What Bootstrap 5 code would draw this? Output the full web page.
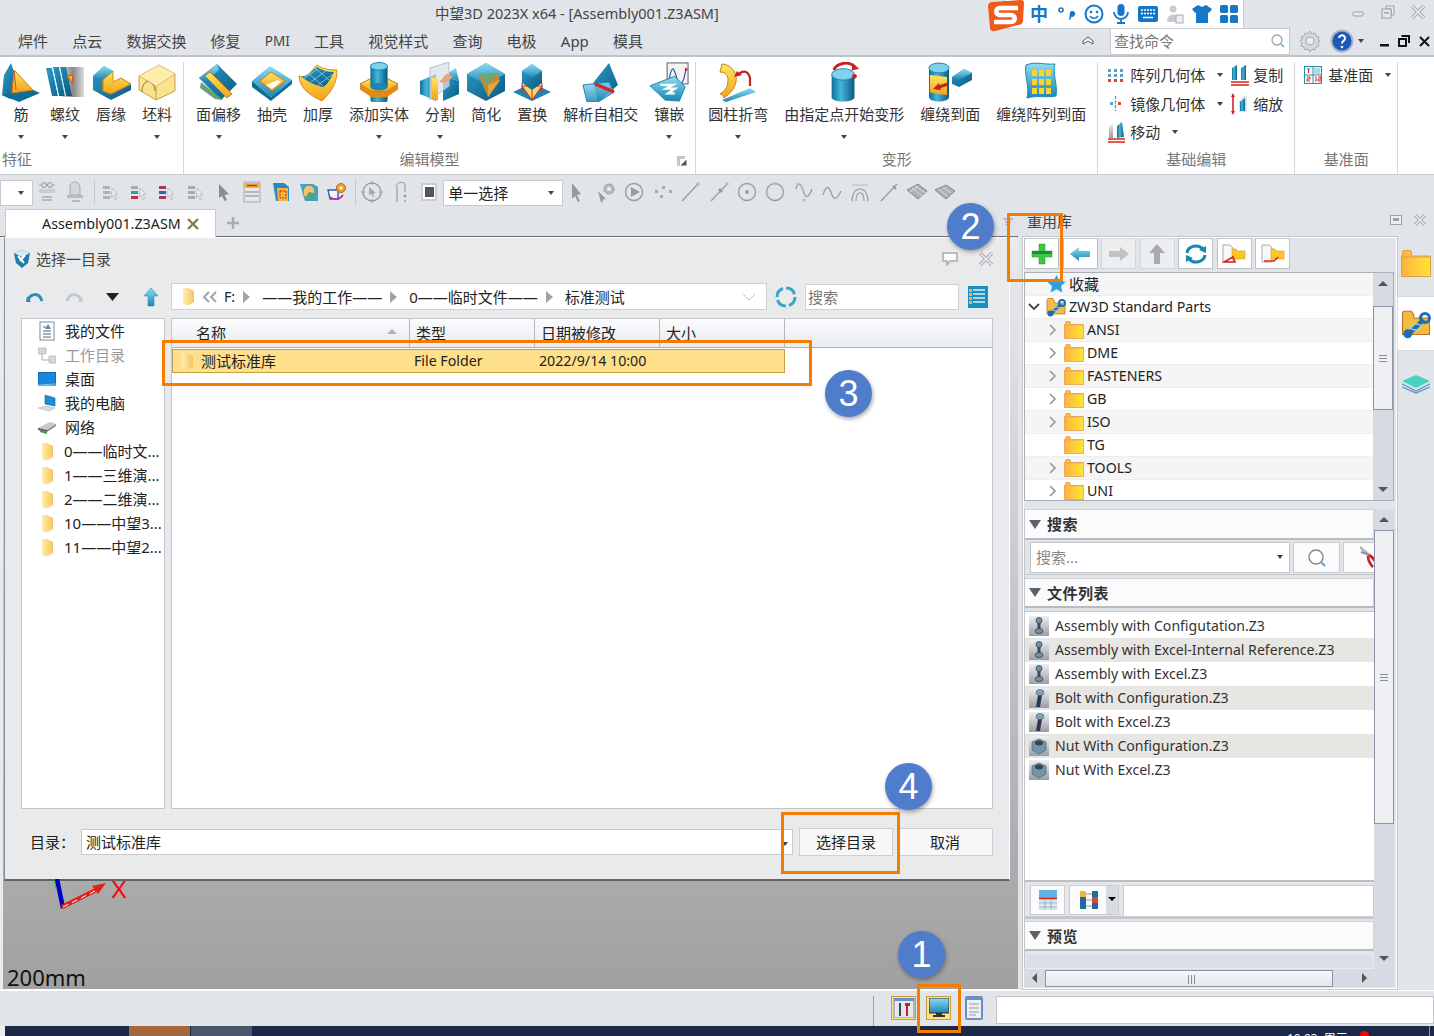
<!DOCTYPE html>
<html lang="en">
<head>
<meta charset="UTF-8">
<title>中望3D 2023X x64</title>
<link href="https://cdn.jsdelivr.net/npm/bootstrap@5.3.0/dist/css/bootstrap.min.css" rel="stylesheet">
<style>
html,body{margin:0;padding:0}
body{width:1434px;height:1036px;overflow:hidden;position:relative;background:#e1e5e9;color:#333;
  font-family:"Noto Sans","Noto Sans CJK SC",sans-serif;font-size:15px;line-height:20px}
svg{display:block;flex:none}
.zw-defs{position:absolute;width:0;height:0}
.zw-latin{font-size:14.2px}
.zw-title{height:27px;font-size:14.5px;color:#444;padding-left:435px;line-height:26px}
.zw-winbtns{position:absolute;top:4px;left:1350px;gap:14px}
.zw-menu{height:28px;padding:0 4px 0 18px;gap:24.2px;line-height:30px;color:#444}
.zw-menu .nav-link{padding:0;color:#444}
.zw-pmi{font-size:13.5px}
.zw-find{width:180px;height:27px;background:#fff;border:1px solid #c6cacf;color:#777;font-size:15px;padding:0 3px;line-height:25px}
.zw-ctl-min{margin-left:16px}
.zw-ctl-x{margin-left:9px}
.zw-ribbon{height:119px;background:#fff;border-top:2px solid #bfc4c9;padding-top:5px;box-shadow:0 1px 0 #c4c8cc}
.zw-group{position:relative;padding:0 3px 0 4px;height:112px;border-right:1px solid #d4d6d9;flex:none}
.zw-group-first{padding-left:0}
.zw-group-last{width:103px;padding-left:9px}
.zw-g4{width:197px;padding:0 0 0 9px}
.zw-g4>div:first-child,.zw-group-last>.zw-sm{margin-top:-1px}
.zw-glabel{position:absolute;left:0;right:0;bottom:5px;text-align:center;color:#777;line-height:20px}
.zw-glabel-left{text-align:left;left:2px}
.zw-glabel-edit{right:20px}
.zw-items{height:88px}
.zw-item{min-width:46px;color:#333;flex:none}
.zw-item-first{min-width:42px}
.zw-item span{margin-top:2px;padding:0 8px;white-space:nowrap;line-height:20px}
.zw-car{width:0;height:0;border-left:3.5px solid transparent;border-right:3.5px solid transparent;border-top:4.5px solid #444}
.zw-item .zw-car{margin-top:11px}
.zw-sm{height:28.5px;gap:6px;white-space:nowrap;color:#333}
.zw-sm .zw-car{margin-left:6px}
.zw-smove{margin-left:-3px}
.zw-c1{width:123px}
.zw-c2 .zw-sm{gap:3px}
.zw-toolbar{height:34px;padding-top:6px;color:#666}
.zw-tb{width:28.3px;height:24px}
.zw-tsep{width:1px;height:24px;background:#c2c6ca;margin:0 2px 0 4px}
.zw-sel{background:#fff;border:1px solid #c6cacf;height:26px;padding:0 4px;flex:none;color:#222;line-height:24px}
.zw-sel-a{width:33px}
.zw-sel-b{width:120px}
.zw-work{height:782px}
.zw-left{width:1018px}
.zw-strip{height:29px;padding-left:5px;border-bottom:1px solid #6d7278}
.zw-tab{width:211px;height:28px;margin-top:1px;background:#fff;border:1px solid #c6cacf;border-bottom:0;padding-left:36px;gap:6px;color:#222;font-size:14.3px}
.zw-plus{margin:8px 0 0 10px}
.zw-canvas{height:753px;padding:0 8px 0 1px;background:linear-gradient(#ebebeb,#a0a0a0);border-left:3px solid #e9ebee;border-bottom:1px solid #fff;position:relative}
.zw-dialog{height:644px;background:#e8eaec;border:1px solid #fff;border-bottom:2px solid #5f6367;border-left-color:#8d9297;padding:0 16px 0 16px;color:#222}
.zw-dhead{height:41px;color:#444;gap:4px}
.zw-dicon{margin-left:-9px}
.zw-dbub{margin-right:13px}
.zw-dx{margin-right:-2px}
.zw-dnav{height:29px;margin-top:3px}
.zw-navbtns{width:150px;padding-left:5px;gap:21px;flex:none}
.zw-crumb{width:596px;height:27px;background:#fff;border:1px solid #cdd0d4;padding:0 10px;gap:8px;white-space:nowrap;flex:none}
.zw-crumb-f{margin-left:-1px}
.zw-refresh{margin:0 7px}
.zw-search{width:154px;height:26px;background:#fff;border:1px solid #cdd0d4;color:#777;padding:0 2px;line-height:24px;flex:none}
.zw-view{margin-left:9px}
.zw-dbody{margin-top:7px;height:491px;gap:6px}
.zw-places{width:144px;background:#fff;border:1px solid #c2c6cb;padding-left:16px;flex:none}
.zw-places .list-group-item{background:none;padding:0;height:24px;gap:9px;color:#222;border:0;white-space:nowrap;overflow:hidden;font-size:15px}
.zw-pf{margin:0 1px 0 3px}
.zw-muted{color:#999!important}
.zw-files{width:822px;background:#fff;border:1px solid #c2c6cb}
.zw-fhead{height:29px;background:linear-gradient(#fafbfc,#e8ecf0);border-bottom:1px solid #aeb3b8;overflow:hidden}
.zw-fhead>div{border-right:1px solid #b4b8bd;padding:4px 0 0 6px;line-height:20px;position:relative}
.zw-ca{width:238px;padding-left:24px!important}
.zw-cb,.zw-cc,.zw-cd{width:125px}
.zw-sort{position:absolute;right:12px;top:10px;width:0;height:0;border-left:5px solid transparent;border-right:5px solid transparent;border-bottom:5px solid #b0b4b8}
.zw-frow{width:613px;height:24px;margin-top:1px;background:#ffe08a;border:1px solid #c6a040;border-left-color:#b8a060;line-height:22px}
.zw-frow .zw-ca{padding-left:8px!important;gap:7px}
.zw-frow .zw-cb,.zw-frow .zw-cc{padding-left:3px}
.zw-dfoot{margin-top:19px;gap:6px;padding-left:9px}
.zw-combo{width:712px;height:26px;background:#fff;border:1px solid #c6cacf;padding:0 4px;line-height:24px;flex:none}
.zw-dbtn{--bs-btn-padding-y:0;--bs-btn-padding-x:0;--bs-btn-font-size:15px;--bs-btn-line-height:26px;--bs-btn-border-radius:0;--bs-btn-bg:#f7f7f7;--bs-btn-border-color:#cdd0d4;--bs-btn-color:#222;width:94px;height:28px;flex:none}
.zw-dbtn2{width:96px;margin-left:-2px}
.zw-axes{position:absolute;left:47px;top:642px}
.zw-xl{position:absolute;left:108px;top:639px;color:#f00;font-size:24px;line-height:28px;font-family:"Liberation Sans",sans-serif}
.zw-scale{position:absolute;left:4px;top:727px;color:#111;font-size:22px;line-height:26px}
.zw-dropmark{position:absolute;left:1002px;top:10px}
.zw-right{width:380px;padding-left:4px}
.zw-rhead{height:28px;padding:3px 0 0 5px;color:#444;position:relative}
.zw-rbtns{position:absolute;right:-29px;top:6px;gap:11px}
.zw-panel{height:754px;width:376px;border:1px solid #c2c7cc;box-shadow:inset 0 0 0 1px #fff;padding:1px 2px 0 1px;flex:none}
.zw-pbtns{height:31px;gap:3.5px;margin-bottom:3px}
.zw-pbtn{--bs-btn-padding-x:0;--bs-btn-padding-y:0;--bs-btn-border-radius:0;--bs-btn-bg:#fff;--bs-btn-border-color:#bcc1c6;width:35px;height:31px}
.zw-pbtn-off{--bs-btn-bg:#eceef0;--bs-btn-border-color:#d2d5d9}
.zw-tree{height:229px;border:1px solid #a9afb6;background:#fff;overflow:hidden;width:370px}
.zw-tlist{width:349px;height:227px;overflow:hidden}
.zw-tlist .list-group-item{height:23px;border:0;border-bottom:1px solid #eee;padding:0;background:#fff;font-size:14.2px;color:#222;line-height:22px;gap:3px;border-radius:0}
.zw-tlist .list-group-item:nth-child(odd){background:#f5f5f5}
.zw-tpad{width:36px}
.zw-tpad1{width:19px}
.zw-fav{font-size:15px}
.zw-tchev0{margin-left:3px}
.zw-zwico{margin-left:3px}
.zw-vs{width:20px;background:#d6dbe3;position:relative;flex:none}
.zw-thumb{position:absolute;left:0;right:0;background:#eef0f4;border:1px solid #8b95a5}
.zw-t1{top:33px;height:104px}
.zw-t2{top:21px;height:294px}
.zw-grip{position:absolute;left:5px;right:5px;top:50%;height:7px;margin-top:-3px;border-top:1px solid #8a8f96;border-bottom:1px solid #8a8f96}
.zw-grip::after{content:"";display:block;height:1px;background:#8a8f96;margin-top:2px}
.zw-up,.zw-dn{position:absolute;left:5px;width:0;height:0;border-left:5px solid transparent;border-right:5px solid transparent}
.zw-up{top:8px;border-bottom:5px solid #555}
.zw-dn{bottom:8px;border-top:5px solid #555}
.zw-lower{margin-top:8px;grid-template-columns:350px 20px;grid-template-rows:460px 18px;width:370px;height:478px}
.zw-col{overflow:hidden;border-left:1px solid #c2c7cc}
.zw-shead{height:30px;background:#fbfbfc;border:1px solid #d0d3d7;border-bottom:2px solid #b8bcc1;border-left:0;font-weight:700;color:#333;padding-left:4px;gap:6px;letter-spacing:.5px;line-height:28px}
.zw-shead1{height:31px}
.zw-tri{width:0;height:0;border-left:6px solid transparent;border-right:6px solid transparent;border-top:9px solid #5c6167}
.zw-srow{height:35px;padding:2px 0 0 5px;gap:3px;border-bottom:1px solid #c2c7cc;margin-bottom:3px;width:360px}
.zw-scombo{width:260px;height:31px;background:#fff;border:1px solid #c2c7cc;color:#888;padding:0 5px;line-height:29px;position:relative;flex:none}
.zw-scombo .zw-car{position:absolute;right:6px;top:12px}
.zw-sbtn{--bs-btn-padding-x:0;--bs-btn-padding-y:0;--bs-btn-border-radius:0;--bs-btn-bg:#fbfbfb;--bs-btn-border-color:#c9cdd2;width:47px;height:31px;flex:none;overflow:hidden}
.zw-flist{height:271px;margin-top:3px;background:#fff;border-top:1px solid #c2c7cc;border-bottom:2px solid #bcc0c5;padding-top:2px}
.zw-flist .list-group-item{height:24px;border:0;padding:0 0 0 4px;gap:6px;background:#fff;color:#333;font-size:14.1px;white-space:nowrap;border-radius:0}
.zw-flist .list-group-item:nth-child(even){background:#e8e6e2}
.zw-ftb{height:37px;padding:3px 0 0 5px;gap:4px;border-bottom:3px solid #c4c8cc;background:#e4e6e9}
.zw-fbtn{width:35px;height:30px;border:1px solid #c9cdd2;background:#fbfbfb}
.zw-fbtn2{width:50px;background:linear-gradient(90deg,#fbfbfb 76%,#d9dde2 76%);padding-right:11px;position:relative}
.zw-fbtn2 .zw-car{position:absolute;right:2px;top:11px;border-top-color:#000;border-left-width:4px;border-right-width:4px}
.zw-finput{flex:1;height:32px;background:#fff;border:1px solid #c9cdd2}
.zw-shead2{margin-top:2px}
.zw-pv{height:16px;background:#dce0e6;margin-top:2px;border:1px solid #e9ebee}
.zw-hs{height:18px;background:#d6dbe3;position:relative;grid-column:1}
.zw-hthumb{position:absolute;left:21px;width:288px;top:1px;height:17px;background:linear-gradient(#f6f7f9,#e4e8ee);border:1px solid #8b95a5}
.zw-hgrip{position:absolute;left:142px;top:4px;width:7px;height:9px;border-left:1px solid #8a8f96;border-right:1px solid #8a8f96}
.zw-hgrip::after{content:"";display:block;width:1px;height:9px;background:#8a8f96;margin-left:2px}
.zw-la,.zw-ra{position:absolute;top:4px;width:0;height:0;border-top:5px solid transparent;border-bottom:5px solid transparent}
.zw-la{left:8px;border-right:5px solid #555}
.zw-ra{right:7px;border-left:5px solid #555}
.zw-corner{background:#d6dbe3}
.zw-side{width:36px;padding-top:42px}
.zw-stab{height:55px;width:37px;background:#fff;border:1px solid #d8dbde;border-right:0;margin:19px 0 19px -1px;padding-left:3px}
.zw-status{height:36px;padding-top:5px;border-top:1px solid #fff}
.zw-ssep{width:1px;height:30px;background:#9aa0a6;margin:0 17px 0 873px}
.zw-sico{width:25px;height:24px;margin-right:10px}
.zw-sico-on{background:#ffe07c;border:1px solid #c6a040}
.zw-sdoc{margin-left:4px}
.zw-sinput{width:438px;height:28px;background:#fff;border:1px solid #c2c6ca;margin-left:13px}
.zw-task{height:10px;background:#1b2848;overflow:hidden;border-left:5px solid #eceef0;position:relative}
.zw-tk1{width:61px;height:10px;background:#a5663a;margin-left:124px}
.zw-tk2{width:61px;height:10px;background:#4a566b;margin-left:1px}
.zw-clock{position:absolute;left:1282px;top:6px;color:#fff;font-size:12px;line-height:14px;gap:6px;white-space:nowrap}
.zw-badge{position:absolute;left:1355px;top:5px;width:9px;height:9px;background:#f00;border-radius:50%}
.zw-tline{position:absolute;left:1424px;top:0;width:1px;height:10px;background:#8f97a6}
.zw-sogou{position:absolute;left:1005px;top:0;width:239px;height:29px;background:#fff;border:1px solid #c8ccd0;border-top:0;padding-left:24px;gap:8px}
.zw-sogou span{color:#1677c8;font-size:18px}
.zw-slogo{position:absolute;left:987px;top:0}
.zw-box{position:absolute;border:3px solid #f57c00;pointer-events:none}
.zw-b2{left:1007px;top:213px;width:56px;height:69px}
.zw-b3{left:162px;top:340px;width:650px;height:46px}
.zw-b4{left:781px;top:812px;width:119px;height:62px}
.zw-b1{left:917px;top:984px;width:44px;height:49px}
.zw-num{position:absolute;width:47px;height:47px;background:#4f7dcb;color:#fff;font-family:"Liberation Sans",sans-serif;font-size:36px;box-shadow:1px 2px 4px rgba(0,0,0,.35)}
.zw-n1{left:898px;top:931px}
.zw-n2{left:947px;top:203px}
.zw-n3{left:825px;top:370px}
.zw-n4{left:885px;top:763px}
</style>
</head>
<body>

<svg class="zw-defs">
  <defs>
    <linearGradient id="blu" x1="0" y1="0" x2="0" y2="1"><stop offset="0" stop-color="#8fdcf0"/><stop offset="1" stop-color="#1a86b4"/></linearGradient>
    <linearGradient id="bld" x1="0" y1="0" x2="1" y2="1"><stop offset="0" stop-color="#2b9cc8"/><stop offset="1" stop-color="#0b5a80"/></linearGradient>
    <linearGradient id="cyl" x1="0" y1="0" x2="1" y2="0"><stop offset="0" stop-color="#0e6f98"/><stop offset=".4" stop-color="#45b6da"/><stop offset="1" stop-color="#0b5a80"/></linearGradient>
    <linearGradient id="yel" x1="0" y1="0" x2="0" y2="1"><stop offset="0" stop-color="#ffe65c"/><stop offset="1" stop-color="#f2a21c"/></linearGradient>
    <linearGradient id="fol" x1="0" y1="0" x2="1" y2="0"><stop offset="0" stop-color="#ffb23e"/><stop offset="1" stop-color="#ffe635"/></linearGradient>
    <linearGradient id="pal" x1="0" y1="0" x2="1" y2="0"><stop offset="0" stop-color="#ffeeb0"/><stop offset="1" stop-color="#f4c45e"/></linearGradient>
    <linearGradient id="gry" x1="0" y1="0" x2="0" y2="1"><stop offset="0" stop-color="#f0f0f2"/><stop offset="1" stop-color="#9a9da3"/></linearGradient>
    <linearGradient id="stl" x1="0" y1="0" x2="1" y2="0"><stop offset="0" stop-color="#d6d6d6"/><stop offset=".5" stop-color="#888"/><stop offset="1" stop-color="#dcdcdc"/></linearGradient>
  </defs>
  <symbol id="i-fold" viewBox="0 0 20 18"><path d="M.5 17.5V3.5h1V1.5c0-.6.4-1 1-1h3c.5 0 1 .5 1 1v2h13v14z" fill="url(#fol)" stroke="#e39a55" stroke-width=".8"/><path d="M1 4h18" stroke="#e39a55" stroke-width=".6"/></symbol>
  <symbol id="i-pale" viewBox="0 0 13 19"><path d="M1 1h5l6 3v11l-6 3.5L1 17z" fill="url(#pal)"/></symbol>
  <symbol id="i-tool" viewBox="0 0 20 20"><path d="M1 6V3c0-1 .5-1.500 1.500-1.500H7L8.500 4V6H19v11H1z" fill="#f4bb3c" stroke="#b5702c" stroke-width=".7"/><path d="M5 17L15 7" stroke="#1c6fb0" stroke-width="3"/><circle cx="16" cy="6" r="3" fill="none" stroke="#1c6fb0" stroke-width="2"/><circle cx="4.5" cy="16.5" r="3" fill="#1c6fb0"/><ellipse cx="10" cy="12" rx="3.5" ry="2" fill="none" stroke="#9fd0ea"/></symbol>
  <symbol id="i-asm" viewBox="0 0 20 20"><rect width="20" height="20" fill="url(#gry)"/><rect x="8.5" y="6" width="3" height="9" fill="#3b4668"/><circle cx="10" cy="4.5" r="3" fill="#6d93ab" stroke="#333" stroke-width=".7"/><ellipse cx="10" cy="15" rx="4" ry="2.5" fill="#6d93ab" stroke="#333" stroke-width=".7"/></symbol>
  <symbol id="i-bolt" viewBox="0 0 20 20"><rect width="20" height="20" fill="url(#gry)"/><path d="M9 7h4l-2 12H7z" fill="#2d3558"/><ellipse cx="11" cy="4.5" rx="4" ry="3" fill="#7ea3b5" stroke="#555" stroke-width=".6"/></symbol>
  <symbol id="i-nut" viewBox="0 0 20 20"><rect width="20" height="20" fill="url(#gry)"/><path d="M3 6l7-3 7 3v8l-7 4-7-4z" fill="#6f96ab" stroke="#4a5a66" stroke-width=".6"/><ellipse cx="10" cy="7" rx="4" ry="2.5" fill="#34424c"/></symbol>
</svg>

<div class="zw-title">中望3D 2023X x64 - [Assembly001.Z3ASM]</div>
<div class="zw-winbtns d-flex position-absolute">
  <svg width="16" height="16" viewBox="0 0 16 16"><rect x="3" y="8" width="10" height="4" rx="1" fill="#e8eaec" stroke="#9aa0a6"/></svg>
  <svg width="16" height="16" viewBox="0 0 16 16"><path d="M6 2h8v9h-3V5H6z" fill="#e8eaec" stroke="#9aa0a6"/><rect x="2" y="5" width="9" height="9" fill="#e8eaec" stroke="#9aa0a6"/><rect x="4" y="8" width="5" height="1.5" fill="#9aa0a6"/></svg>
  <svg width="16" height="16" viewBox="0 0 16 16"><path d="M2 2l12 12M14 2L2 14" stroke="#a4a9ae" stroke-width="3.5"/><path d="M2 2l12 12M14 2L2 14" stroke="#eef0f2" stroke-width="1.5"/></svg>
</div>

<nav class="zw-menu nav d-flex align-items-center flex-nowrap">
  <a class="nav-link" href="#">焊件</a><a class="nav-link" href="#">点云</a><a class="nav-link" href="#">数据交换</a><a class="nav-link" href="#">修复</a><a class="nav-link zw-pmi" href="#">PMI</a><a class="nav-link" href="#">工具</a><a class="nav-link" href="#">视觉样式</a><a class="nav-link" href="#">查询</a><a class="nav-link" href="#">电极</a><a class="nav-link" href="#">App</a><a class="nav-link" href="#">模具</a>
  <div class="ms-auto d-flex align-items-center">
    <svg class="me-3" width="12" height="12" viewBox="0 0 12 12"><path d="M1 6l5-4 5 4v3L6 6 1 9z" fill="#fff" stroke="#555"/></svg>
    <div class="zw-find d-flex justify-content-between align-items-center">查找命令
      <svg width="16" height="16" viewBox="0 0 16 16"><circle cx="7" cy="7" r="5" fill="none" stroke="#a0a4a8" stroke-width="1.3"/><path d="M11 11l3 3" stroke="#5ba7c9" stroke-width="1.5"/></svg>
    </div>
    <svg class="ms-2" width="24" height="24" viewBox="0 0 24 24"><path d="M12 2l2 3 3-1 1 3 3 1-1 3 2 1-2 2 1 3-3 1-1 3-3-1-2 3-2-3-3 1-1-3-3-1 1-3-2-2 2-1-1-3 3-1 1-3 3 1z" fill="#d6d8db" stroke="#a8abaf"/><circle cx="12" cy="12" r="4" fill="#eceef0" stroke="#a8abaf"/></svg>
    <svg class="ms-2" width="24" height="24" viewBox="0 0 24 24"><circle cx="12" cy="12" r="10.5" fill="#1d57b8" stroke="#a9b4c6" stroke-width="2"/><path d="M9 9a3 3 0 1 1 4.5 2.8c-1 .6-1.5 1.2-1.5 2.7" fill="none" stroke="#fff" stroke-width="2"/><circle cx="12" cy="18" r="1.3" fill="#fff"/></svg>
    <div class="zw-car ms-1"></div>
    <svg class="zw-ctl-min" width="10" height="12" viewBox="0 0 10 12"><rect x="0" y="9" width="9" height="2.5" fill="#111"/></svg>
    <svg class="ms-2" width="12" height="12" viewBox="0 0 12 12"><path d="M3.5 1h7.5v7" fill="none" stroke="#111" stroke-width="2"/><rect x="1" y="4" width="7" height="7" fill="none" stroke="#111" stroke-width="2"/></svg>
    <svg class="zw-ctl-x" width="11" height="11" viewBox="0 0 11 11"><path d="M1 1l9 9M10 1l-9 9" stroke="#111" stroke-width="2"/></svg>
  </div>
</nav>

<div class="zw-ribbon d-flex">
  <div class="zw-group zw-group-first">
    <div class="zw-items d-flex">
      <div class="zw-item zw-item-first d-flex flex-column align-items-center">
        <svg width="40" height="40" viewBox="0 0 40 40"><path d="M10 1l-7 12-2 20 8 4 12-4z" fill="url(#bld)"/><path d="M1 33l17 7 21-9-9-4-21 4z" fill="#0f6e98"/><path d="M13 8l-2 23 21-3z" fill="url(#yel)" stroke="#d9791a"/><path d="M13 8l2 20" stroke="#c9541a"/></svg>
        <span>筋</span><div class="zw-car"></div></div>
      <div class="zw-item d-flex flex-column align-items-center">
        <svg width="42" height="40" viewBox="0 0 42 40"><rect x="18" y="5" width="22" height="30" fill="url(#stl)"/><path d="M2 6h6l6 28H8zM9 5h6l6 29h-6zM16 5h6l6 29h-6z" fill="url(#bld)"/><path d="M8 6h1l6 28h-1zM15 5h1l6 29h-1z" fill="#d6eef6"/><path d="M23 14l6-1-1 8z" fill="#f5b21c" stroke="#c9541a"/></svg>
        <span>螺纹</span><div class="zw-car"></div></div>
      <div class="zw-item d-flex flex-column align-items-center">
        <svg width="40" height="40" viewBox="0 0 40 40"><path d="M2 14l11-10 9 5v11l8-4 10 6v6L20 38 2 28z" fill="url(#bld)"/><path d="M2 14l11-10 9 5-10 9z" fill="url(#blu)"/><path d="M12 18l10-9v11l8-4 10 6-20 10-8-3z" fill="url(#yel)" stroke="#d98a1a"/><path d="M12 18v11" stroke="#d98a1a"/></svg>
        <span>唇缘</span></div>
      <div class="zw-item d-flex flex-column align-items-center">
        <svg width="40" height="40" viewBox="0 0 40 40"><path d="M2 14l20-11 16 9v17L19 38 2 28z" fill="#fbe28c" stroke="#c89a55"/><path d="M2 14l17 10 19-12M19 24v14" fill="none" stroke="#c89a55"/><path d="M5 30c0-14 12-14 13-1" fill="none" stroke="#8a7a40"/><path d="M2 14l20-11 16 9-19 12z" fill="#fff2b8" fill-opacity=".7"/></svg>
        <span>坯料</span><div class="zw-car"></div></div>
    </div>
    <div class="zw-glabel zw-glabel-left">特征</div>
  </div>
  <div class="zw-group">
    <div class="zw-items d-flex">
      <div class="zw-item d-flex flex-column align-items-center">
        <svg width="44" height="40" viewBox="0 0 44 40"><path d="M2 16L20 2l20 20-16 16z" fill="url(#bld)"/><path d="M2 16L20 2l2 6L8 20z" fill="url(#blu)"/><path d="M8 14l5-4 22 22-5 4z" fill="url(#yel)" stroke="#c9841a"/><path d="M4 20l22 18-8-1L3 26z" fill="#6a9f7a"/></svg>
        <span>面偏移</span><div class="zw-car"></div></div>
      <div class="zw-item d-flex flex-column align-items-center">
        <svg width="42" height="40" viewBox="0 0 42 40"><path d="M1 19L19 4l22 14-21 17z" fill="url(#blu)"/><path d="M1 19v6l19 14v-4zM20 35v4l21-17v-4z" fill="#0f6e98"/><path d="M9 19l11-9 14 9-13 10z" fill="url(#yel)" stroke="#d9791a"/><path d="M15 23l12-5 3 2-9 7z" fill="#fff"/></svg>
        <span>抽壳</span></div>
      <div class="zw-item d-flex flex-column align-items-center">
        <svg width="40" height="40" viewBox="0 0 40 40"><path d="M1 14c8 4 14-8 18-11 6 4 12 5 20 5 0 14-6 22-15 31C14 34 2 28 1 14z" fill="url(#yel)" stroke="#d98a1a"/><path d="M3 14c7 2 11-6 16-9 5 3 10 5 17 5-4 8-7 13-11 15-8-2-16-5-22-11z" fill="url(#bld)"/><path d="M10 11l15 13M17 6l14 12M6 16l14-9M13 20l16-12M20 23L35 12" stroke="#9fdcf0" stroke-width=".7" fill="none"/></svg>
        <span>加厚</span></div>
      <div class="zw-item d-flex flex-column align-items-center">
        <svg width="44" height="40" viewBox="0 0 44 42"><rect x="13" y="24" width="18" height="18" rx="2" fill="url(#cyl)"/><path d="M2 23l12-6h16l12 6-12 8H14z" fill="url(#yel)" stroke="#b9761a"/><path d="M2 23v6l12 8h16l12-8v-6l-12 8H14z" fill="#e58a14"/><rect x="13" y="4" width="18" height="22" fill="url(#cyl)"/><ellipse cx="22" cy="4.5" rx="9" ry="4" fill="#7ed2ea" stroke="#1a86b4"/><ellipse cx="22" cy="26" rx="9" ry="4" fill="#1a86b4"/></svg>
        <span>添加实体</span><div class="zw-car"></div></div>
      <div class="zw-item d-flex flex-column align-items-center">
        <svg width="42" height="40" viewBox="0 0 42 40"><path d="M1 19l16-7v27L1 32z" fill="url(#cyl)"/><path d="M24 14l16 5v13l-16 7z" fill="url(#bld)"/><path d="M24 14l13-8 3 13z" fill="url(#blu)"/><path d="M11 6l19-6v24L11 38z" fill="#d9e0e4" fill-opacity=".75" stroke="#b9c2c7"/><path d="M13 16h6v22h-6z" fill="url(#yel)"/><path d="M20 20l8-8 6 3-8 6z" fill="#f1a27a"/></svg>
        <span>分割</span><div class="zw-car"></div></div>
      <div class="zw-item d-flex flex-column align-items-center">
        <svg width="40" height="40" viewBox="0 0 40 40"><path d="M20 1l19 11v17L20 39 1 29V12z" fill="url(#bld)"/><path d="M20 1l19 11-19 11L1 12z" fill="url(#blu)"/><path d="M12 12l19-1 3 7-12 17z" fill="#c08a3e"/><path d="M12 12l19-1-9 12z" fill="#6fa66f"/><path d="M22 23l12-5-12 17z" fill="#e9a23a"/></svg>
        <span>简化</span></div>
      <div class="zw-item d-flex flex-column align-items-center">
        <svg width="40" height="40" viewBox="0 0 40 40"><path d="M1 30l19-9 19 9-19 9z" fill="#1a86b4"/><path d="M10 24l20 0-10 14z" fill="#f5d66c" stroke="#d8241f"/><path d="M10 9l10-7 10 7v12l-10 7-10-7z" fill="url(#bld)"/><path d="M10 9l10-7 10 7-10 7z" fill="url(#blu)"/><path d="M10 21v10M30 21v10M20 28v10" stroke="#d8241f"/></svg>
        <span>置换</span></div>
      <div class="zw-item d-flex flex-column align-items-center">
        <svg width="40" height="40" viewBox="0 0 40 40"><path d="M28 1l9 22-20 17-5-19z" fill="url(#bld)"/><path d="M2 23l26-3 5 10-16 10H6z" fill="url(#blu)" fill-opacity=".85" stroke="#1a86b4"/><path d="M14 22l19 8" stroke="#e0201c" stroke-width="3.5"/></svg>
        <span>解析自相交</span></div>
      <div class="zw-item d-flex flex-column align-items-center">
        <svg width="42" height="40" viewBox="0 0 42 42"><rect x="19" y="1" width="22" height="22" fill="#f4f4f4" stroke="#555"/><path d="M21 19c4-22 6-8 9 0 3 6 6 6 9-13" fill="none" stroke="#2449a8" stroke-width="1.2"/><circle cx="21.5" cy="18" r="1.5" fill="#e0201c"/><circle cx="39" cy="8" r="1.5" fill="#e0201c"/><path d="M1 25l26-10 11 11-6 15-15-1z" fill="url(#blu)" stroke="#1a86b4"/><path d="M12 24h13l-7 4h9l-7 5h7" fill="none" stroke="#fff" stroke-width="2.5"/></svg>
        <span>镶嵌</span><div class="zw-car"></div></div>
    </div>
    <div class="zw-glabel zw-glabel-edit">编辑模型</div>
    <svg class="position-absolute bottom-0 end-0 mb-2 me-2" width="10" height="10" viewBox="0 0 10 10"><path d="M.5.5h7v2h-5v7h-2z" fill="#ccc" stroke="#999" stroke-width=".5"/><path d="M3.5 9.5h6v-6z" fill="#555"/></svg>
  </div>
  <div class="zw-group">
    <div class="zw-items d-flex">
      <div class="zw-item d-flex flex-column align-items-center">
        <svg width="40" height="40" viewBox="0 0 40 40"><path d="M4 38l28-12 6 4-30 10z" fill="url(#blu)"/><path d="M4 2c6 0 16 6 14 18-1 6-6 12-12 16-1-2-2-4-4-4 6-4 8-8 8-14 0-4-2-8-8-8z" fill="url(#yel)" stroke="#c9841a"/><path d="M20 13c4-5 10-5 12 3v8" fill="none" stroke="#c8201c" stroke-width="2.2"/><path d="M16 15l3-6 5 4z" fill="#c8201c"/></svg>
        <span>圆柱折弯</span><div class="zw-car"></div></div>
      <div class="zw-item d-flex flex-column align-items-center">
        <svg width="38" height="40" viewBox="0 0 40 42"><path d="M7 13h24v24c0 6-24 6-24 0z" fill="url(#cyl)"/><ellipse cx="19" cy="13" rx="12" ry="6" fill="#7ed2ea" stroke="#1a86b4"/><path d="M9 8C14 0 26-1 31 5" fill="none" stroke="#c8201c" stroke-width="3"/><path d="M29 1l7 6-8 2z" fill="#c8201c"/><circle cx="31" cy="15" r="2.5" fill="#c8201c"/></svg>
        <span>由指定点开始变形</span><div class="zw-car"></div></div>
      <div class="zw-item d-flex flex-column align-items-center">
        <svg width="44" height="40" viewBox="0 0 44 40"><path d="M1 6h20v29c0 6-20 6-20 0z" fill="url(#cyl)"/><ellipse cx="11" cy="6" rx="10" ry="5" fill="#7ed2ea" stroke="#1a86b4"/><path d="M2 13l17 2v18L8 32 2 30z" fill="url(#yel)"/><path d="M20 22L8 26" stroke="#c8201c" stroke-width="3"/><path d="M5 27l6-6 2 7z" fill="#c8201c"/><path d="M24 15l12-8 8 4v7l-13 7-7-3z" fill="url(#bld)"/><path d="M24 15l12-8 8 4-13 7z" fill="url(#blu)"/></svg>
        <span>缠绕到面</span></div>
      <div class="zw-item d-flex flex-column align-items-center">
        <svg width="36" height="40" viewBox="0 0 36 40"><path d="M3 3c10-4 18 0 29-1-3 10 3 20 1 32-11 2-19-1-29 2 3-12-3-22-1-33z" fill="url(#blu)" stroke="#1a86b4"/><path d="M9 8h5v6H9zM16 8h5v6h-5zM23 8h5v6h-5zM9 17h5v6H9zM16 17h5v6h-5zM23 17h5v6h-5zM9 26h5v6H9zM16 26h5v6h-5zM23 26h5v6h-5z" fill="#ffd428"/></svg>
        <span>缠绕阵列到面</span></div>
    </div>
    <div class="zw-glabel">变形</div>
  </div>
  <div class="zw-group zw-g4">
    <div class="d-flex">
      <div class="zw-c1">
        <div class="zw-sm d-flex align-items-center"><svg width="17" height="17" viewBox="0 0 17 17"><path d="M1 2h3v3H1zM7 2h3v3H7zM13 2h3v3h-3zM1 7h3v3H1zM7 7h3v3H7zM13 7h3v3h-3z" fill="#5e9fc7"/><path d="M1 12h3v3H1zM7 12h3v3H7zM13 12h3v3h-3z" fill="#d8483a"/></svg>阵列几何体<div class="zw-car"></div></div>
        <div class="zw-sm d-flex align-items-center"><svg width="17" height="17" viewBox="0 0 17 17"><path d="M8.5 1v15" stroke="#5e9fc7" stroke-width="1.4" stroke-dasharray="3 1.5"/><rect x="3" y="7" width="3" height="3" fill="#5ba7d6"/><rect x="11" y="7" width="3" height="3" fill="#d8483a"/></svg>镜像几何体<div class="zw-car"></div></div>
        <div class="zw-sm d-flex align-items-center"><svg width="20" height="22" viewBox="0 0 20 22"><path d="M2 17V6l4-4v15z" fill="url(#gry)"/><path d="M10 17V5l5-4 2 15z" fill="url(#cyl)"/><path d="M1 18h17M1 21h17" stroke="#d8241f" stroke-width="1.3"/></svg><span class="zw-smove">移动</span><div class="zw-car"></div></div>
      </div>
      <div class="zw-c2">
        <div class="zw-sm d-flex align-items-center"><svg width="20" height="22" viewBox="0 0 20 22"><path d="M2 16V4l5-3v15z" fill="url(#cyl)"/><path d="M11 16V4l5-3v15z" fill="url(#cyl)"/><path d="M1 18h18M1 21h18" stroke="#d8241f" stroke-width="1.3"/></svg>复制</div>
        <div class="zw-sm d-flex align-items-center"><svg width="20" height="22" viewBox="0 0 20 22"><path d="M3 2v18" stroke="#d8241f" stroke-width="1.6"/><path d="M1 4l2-4 2 4zM1 18l2 4 2-4z" fill="#d8241f"/><path d="M9 19V8l6-6 2 1v16z" fill="#dfe3e6"/><path d="M10 18V9l5-4v13z" fill="url(#cyl)"/></svg>缩放</div>
      </div>
    </div>
    <div class="zw-glabel">基础编辑</div>
  </div>
  <div class="zw-group zw-group-last">
    <div class="zw-sm d-flex align-items-center"><svg width="18" height="18" viewBox="0 0 18 18"><rect x=".5" y=".5" width="17" height="17" fill="#fff" stroke="#2a8fb3" stroke-width="1.2"/><path d="M9 1v16M1 9h16" stroke="#2a8fb3"/><rect x="10" y="2" width="6" height="6" fill="#b9d4dc"/><path d="M3 3h3M4.5 3v4M3 11h3v2H3v2h3M11 11h1v4h-1M14 11h3v2h-3v2h3" stroke="#d8241f" fill="none"/></svg>基准面<div class="zw-car"></div></div>
    <div class="zw-glabel">基准面</div>
  </div>
</div>

<div class="zw-toolbar d-flex align-items-start">
  <div class="zw-sel zw-sel-a d-flex justify-content-end align-items-center"><div class="zw-car me-1"></div></div>
  <div class="zw-tb d-flex justify-content-center align-items-center"><svg width="22" height="22" viewBox="0 0 22 22"><path d="M3 4h16M3 10h16" stroke="#aab" fill="none"/><circle cx="8" cy="4" r="2.5" fill="#ddd" stroke="#999"/><circle cx="14" cy="4" r="2.5" fill="#ddd" stroke="#999"/><path d="M3 8h16v4H3z" fill="#ccc"/><path d="M6 16h10M6 19h10" stroke="#aaa" stroke-width="1.5"/></svg></div>
  <div class="zw-tb d-flex justify-content-center align-items-center"><svg width="22" height="22" viewBox="0 0 22 22"><path d="M6 14V6a5 5 0 0 1 10 0v8z" fill="#d4d6d8" stroke="#aaa"/><rect x="3" y="14" width="16" height="3" fill="#bbb"/><path d="M8 20h8" stroke="#aaa" stroke-width="1.5"/></svg></div>
  <div class="zw-tsep"></div>
  <div class="zw-tb d-flex justify-content-center align-items-center"><svg width="20" height="20" viewBox="0 0 20 20"><path d="M2 4h7v3H2zM2 9h7v3H2zM2 14h7v3H2z" fill="#b0b2b4"/><path d="M11 6l6 6-3 .5 2 4-2 1-2-4-2 2z" fill="#e8e8e8" stroke="#aaa" stroke-width=".6"/></svg></div>
  <div class="zw-tb d-flex justify-content-center align-items-center"><svg width="20" height="20" viewBox="0 0 20 20"><path d="M2 4h7v3H2z" fill="#a8aaac"/><path d="M2 9h7v3H2z" fill="#19a7b8"/><path d="M2 14h7v3H2z" fill="#c23050"/><path d="M11 6l6 6-3 .5 2 4-2 1-2-4-2 2z" fill="#e8e8e8" stroke="#aaa" stroke-width=".6"/></svg></div>
  <div class="zw-tb d-flex justify-content-center align-items-center"><svg width="20" height="20" viewBox="0 0 20 20"><path d="M2 4h7v3H2z" fill="#a03a5a"/><path d="M2 9h7v3H2z" fill="#2d62a8"/><path d="M2 14h7v3H2z" fill="#a03a5a"/><path d="M11 6l6 6-3 .5 2 4-2 1-2-4-2 2z" fill="#e8e8e8" stroke="#aaa" stroke-width=".6"/></svg></div>
  <div class="zw-tb d-flex justify-content-center align-items-center"><svg width="20" height="20" viewBox="0 0 20 20"><path d="M2 4h7v3H2zM2 9h7v3H2zM2 14h7v3H2z" fill="#a8aaac"/><path d="M11 6l6 6-3 .5 2 4-2 1-2-4-2 2z" fill="#e8e8e8" stroke="#aaa" stroke-width=".6"/></svg></div>
  <div class="zw-tb d-flex justify-content-center align-items-center"><svg width="18" height="20" viewBox="0 0 18 20"><path d="M4 2l10 10-4.5 1 2.5 5-2.5 1-2.5-5L4 16z" fill="#8a8d90"/></svg></div>
  <div class="zw-tb d-flex justify-content-center align-items-center"><svg width="20" height="22" viewBox="0 0 20 22"><rect x="2" y="1" width="16" height="20" fill="#e8e8e8" stroke="#aaa"/><rect x="2" y="2" width="16" height="5" fill="#f4b33c"/><path d="M5 4.5h10" stroke="#d8241f" stroke-width="1.5"/><path d="M3 11h14M3 15h14" stroke="#9aa" stroke-width="1.5"/></svg></div>
  <div class="zw-tb d-flex justify-content-center align-items-center"><svg width="20" height="22" viewBox="0 0 20 22"><path d="M2 2h11l5 4v14H5z" fill="#2a8ac0"/><path d="M6 7h11v13H7z" fill="#f4b33c"/><path d="M9 10h6v7H9z" fill="none" stroke="#c8201c" stroke-dasharray="2 1"/></svg></div>
  <div class="zw-tb d-flex justify-content-center align-items-center"><svg width="20" height="22" viewBox="0 0 20 22"><path d="M1 3h13l5 3v14H6z" fill="#37a8c9"/><ellipse cx="10" cy="11" rx="6" ry="7" fill="#f0c27a" stroke="#555" stroke-width=".5"/><path d="M6 17l4-6 5 1v5z" fill="#4ca678"/></svg></div>
  <div class="zw-tb d-flex justify-content-center align-items-center"><svg width="22" height="22" viewBox="0 0 22 22"><path d="M2 9h10v9H4z" fill="#f4f4f8" stroke="#2d62a8" stroke-width="1.4"/><path d="M4 16c4 3 10 3 13-2" fill="none" stroke="#c8209c" stroke-width="1.5"/><circle cx="15" cy="7" r="4.5" fill="#f0a030" stroke="#b86a10"/><circle cx="15" cy="7" r="1.5" fill="#fff"/></svg></div>
  <div class="zw-tsep"></div>
  <div class="zw-tb d-flex justify-content-center align-items-center"><svg width="24" height="24" viewBox="0 0 24 24"><circle cx="12" cy="12" r="9" fill="none" stroke="#9a9da0" stroke-width="1.4"/><path d="M12 1v4M12 19v4M1 12h4M19 12h4" stroke="#9a9da0"/><path d="M9 7l7 6-3 .5 1.5 3-1.5.5-1.5-3L9 15z" fill="#aaa"/></svg></div>
  <div class="zw-tb d-flex justify-content-center align-items-center"><svg width="18" height="24" viewBox="0 0 18 24"><path d="M5 22V6c0-5 8-5 8 0v6" fill="none" stroke="#9a9da0" stroke-width="1.2"/><rect x="3" y="4" width="3" height="3" fill="#ccc"/><circle cx="13" cy="16" r="1.5" fill="#9a9da0"/><circle cx="13" cy="21" r="1" fill="#9a9da0"/></svg></div>
  <div class="zw-tb d-flex justify-content-center align-items-center"><svg width="20" height="20" viewBox="0 0 20 20"><rect x="3" y="2" width="14" height="16" fill="#fff" stroke="#ccc" stroke-width="2"/><rect x="6" y="5" width="9" height="10" fill="#555"/></svg></div>
  <div class="zw-sel zw-sel-b d-flex justify-content-between align-items-center">单一选择<div class="zw-car me-1"></div></div>
  <div class="zw-tb d-flex justify-content-center align-items-center"><svg width="20" height="22" viewBox="0 0 20 22"><path d="M5 2l9 11-4 1 3 6-2 1-3-6-3 3z" fill="#999"/></svg></div>
  <div class="zw-tb d-flex justify-content-center align-items-center"><svg width="22" height="22" viewBox="0 0 22 22"><circle cx="14" cy="8" r="5" fill="#bbb" stroke="#888" stroke-dasharray="2 1"/><circle cx="14" cy="8" r="2" fill="#eee"/><path d="M3 10l8 8-3 .5-1 3-1 0z" fill="#999"/></svg></div>
  <div class="zw-tb d-flex justify-content-center align-items-center"><svg width="22" height="22" viewBox="0 0 22 22"><circle cx="11" cy="11" r="8.5" fill="#e4e6e8" stroke="#9a9da0" stroke-width="1.5"/><path d="M8 6l9 5-9 5z" fill="#9a9da0"/></svg></div>
  <div class="zw-tb d-flex justify-content-center align-items-center"><svg width="22" height="20" viewBox="0 0 22 20"><path d="M4 8h3v3H4zM11 4h3v3h-3zM18 8h3v3h-3zM9 13h3v3H9z" fill="#a8aaac"/></svg></div>
  <div class="zw-tb d-flex justify-content-center align-items-center"><svg width="22" height="22" viewBox="0 0 22 22"><path d="M3 20L19 3" stroke="#9a9da0" stroke-width="1.4"/><circle cx="19" cy="3" r="1.8" fill="#bbb"/></svg></div>
  <div class="zw-tb d-flex justify-content-center align-items-center"><svg width="22" height="22" viewBox="0 0 22 22"><path d="M3 20L19 3" stroke="#9a9da0" stroke-width="1.4"/><path d="M11 8l3 3" stroke="#9a9da0" stroke-width="3"/><circle cx="19" cy="3" r="1.8" fill="#bbb"/></svg></div>
  <div class="zw-tb d-flex justify-content-center align-items-center"><svg width="22" height="22" viewBox="0 0 22 22"><circle cx="11" cy="11" r="8.5" fill="none" stroke="#9a9da0" stroke-width="1.4"/><circle cx="11" cy="11" r="2" fill="#9a9da0"/></svg></div>
  <div class="zw-tb d-flex justify-content-center align-items-center"><svg width="22" height="22" viewBox="0 0 22 22"><circle cx="11" cy="11" r="8.5" fill="none" stroke="#9a9da0" stroke-width="1.4"/><circle cx="11" cy="2.5" r="1.5" fill="#bbb"/><circle cx="3" cy="13" r="1.5" fill="#bbb"/><circle cx="19" cy="13" r="1.5" fill="#bbb"/></svg></div>
  <div class="zw-tb d-flex justify-content-center align-items-center"><svg width="22" height="22" viewBox="0 0 22 22"><path d="M3 8c2-8 5-6 8 4 2 6 5 4 8-4" fill="none" stroke="#9a9da0" stroke-width="1.3"/><circle cx="11" cy="19" r="1.5" fill="#bbb"/><circle cx="5" cy="3" r="1.5" fill="#bbb"/></svg></div>
  <div class="zw-tb d-flex justify-content-center align-items-center"><svg width="22" height="22" viewBox="0 0 22 22"><path d="M2 14c3-10 6-10 9 0 2 5 5 5 9-4" fill="none" stroke="#9a9da0" stroke-width="1.3"/></svg></div>
  <div class="zw-tb d-flex justify-content-center align-items-center"><svg width="22" height="22" viewBox="0 0 22 22"><path d="M3 20C3 4 19 4 19 20M7 20C7 9 15 9 15 20" fill="none" stroke="#9a9da0" stroke-width="1.2"/><path d="M3 4h16" stroke="#bbb"/></svg></div>
  <div class="zw-tb d-flex justify-content-center align-items-center"><svg width="22" height="22" viewBox="0 0 22 22"><path d="M3 20L19 3" stroke="#9a9da0" stroke-width="1.4"/><path d="M15 5l3 3" stroke="#9a9da0" stroke-width="2"/></svg></div>
  <div class="zw-tb d-flex justify-content-center align-items-center"><svg width="22" height="20" viewBox="0 0 22 20"><path d="M1 8l11-6 9 7-9 8z" fill="#aeb0b2" stroke="#888"/><path d="M6 6l10 8M9 4l10 7M4 10l8-6" stroke="#ddd"/></svg></div>
  <div class="zw-tb d-flex justify-content-center align-items-center"><svg width="22" height="20" viewBox="0 0 22 20"><path d="M1 8l11-5 9 6-9 8z" fill="#aeb0b2" stroke="#888"/><path d="M5 7l8 7M9 5l8 6" stroke="#ddd"/></svg></div>
</div>

<div class="zw-work d-flex">
  <div class="zw-left position-relative">
    <div class="zw-strip d-flex align-items-start">
      <div class="zw-tab d-flex align-items-center">Assembly001.Z3ASM
        <svg width="12" height="12" viewBox="0 0 12 12"><path d="M1 1l10 10M11 1L1 11" stroke="#8a7a4a" stroke-width="2.4"/></svg>
      </div>
      <svg class="zw-plus" width="14" height="14" viewBox="0 0 14 14"><path d="M7 1v12M1 7h12" stroke="#a8adb2" stroke-width="2.4"/></svg>
      <svg class="zw-dropmark" width="12" height="10" viewBox="0 0 12 10"><path d="M1 1h10M3 4h6" stroke="#a9adb1" stroke-width="1.4"/><path d="M3 6h6l-3 3z" fill="#a9adb1"/></svg>
    </div>
    <div class="zw-canvas">
      <div class="zw-dialog d-flex flex-column">
        <div class="zw-dhead d-flex align-items-center position-relative">
          <svg class="zw-dicon" width="20" height="20" viewBox="0 0 20 20"><path d="M2 4l8-3 8 3-2 10-6 5-6-5z" fill="#1c7ba8"/><path d="M2 4l8-3 8 3-8 4z" fill="#d6e9f2"/><path d="M6 7l6 7M13 6l-5 6" stroke="#fff" stroke-width="2"/></svg>
          <span>选择一目录</span>
          <svg class="ms-auto zw-dbub" width="20" height="14" viewBox="0 0 20 14"><path d="M3 1h14v8H10l-3 4V9H3z" fill="#fafafa" stroke="#a8adb2" stroke-width="1.5"/></svg>
          <svg class="zw-dx" width="18" height="14" viewBox="0 0 18 14"><path d="M3 1l12 12M15 1L3 13" stroke="#a8adb2" stroke-width="3.5"/><path d="M3 1l12 12M15 1L3 13" stroke="#f2f2f2" stroke-width="1.3"/></svg>
        </div>
        <div class="zw-dnav d-flex align-items-center">
          <div class="zw-navbtns d-flex align-items-center">
            <svg width="18" height="14" viewBox="0 0 18 14"><path d="M2 11C4 3 13 2 16 11" fill="none" stroke="#2a8fb3" stroke-width="3"/><path d="M1 6l4 6H0z" fill="#2a8fb3"/></svg>
            <svg width="18" height="14" viewBox="0 0 18 14"><path d="M16 11C14 3 5 2 2 11" fill="none" stroke="#c6cacd" stroke-width="3"/><path d="M17 6l-4 6h5z" fill="#c6cacd"/></svg>
            <svg width="18" height="14" viewBox="0 0 18 14"><path d="M2 3h13l-6.5 8z" fill="#222"/></svg>
            <svg width="16" height="20" viewBox="0 0 16 20"><path d="M8 1l7 8h-4v10H5V9H1z" fill="url(#blu)" stroke="#1a86b4" stroke-width=".5"/></svg>
          </div>
          <div class="zw-crumb d-flex align-items-center">
            <svg width="13" height="19"><use href="#i-pale"/></svg>
            <svg width="14" height="12" viewBox="0 0 14 12"><path d="M6 1L1 6l5 5M13 1L8 6l5 5" fill="none" stroke="#9ca4ad" stroke-width="2"/></svg>
            <span class="zw-crumb-f zw-latin">F:</span>
            <svg width="7" height="12" viewBox="0 0 7 12"><path d="M0 0l7 6-7 6z" fill="#9ca4ad"/></svg>
            <span class="ms-1">——我的工作——</span>
            <svg width="7" height="12" viewBox="0 0 7 12"><path d="M0 0l7 6-7 6z" fill="#9ca4ad"/></svg>
            <span class="ms-1">0——临时文件——</span>
            <svg width="7" height="12" viewBox="0 0 7 12"><path d="M0 0l7 6-7 6z" fill="#9ca4ad"/></svg>
            <span class="ms-1">标准测试</span>
            <svg class="ms-auto" width="14" height="8" viewBox="0 0 14 8"><path d="M1 1l6 6 6-6" fill="none" stroke="#c2c6ca"/></svg>
          </div>
          <svg class="zw-refresh" width="24" height="24" viewBox="0 0 24 24"><circle cx="12" cy="12" r="9" fill="none" stroke="#3ea4c6" stroke-width="3" stroke-dasharray="11 3.1"/></svg>
          <div class="zw-search">搜索</div>
          <svg class="zw-view" width="20" height="22" viewBox="0 0 20 22"><rect width="20" height="22" fill="#1b8ec0"/><path d="M5 4h12M5 8h12M5 12h12M5 16h12" stroke="#d8f0fa" stroke-width="1.5"/><path d="M1 3h3v3H1zM1 7h3v3H1zM1 11h3v3H1zM1 15h3v3H1z" fill="#f4b33c"/></svg>
        </div>
        <div class="zw-dbody d-flex">
          <div class="zw-places list-group list-group-flush">
            <div class="list-group-item d-flex align-items-center"><svg width="18" height="20" viewBox="0 0 18 20"><rect x="2" y="1" width="14" height="18" fill="#fff" stroke="#7a8a9a"/><path d="M5 6h3M5 10h8M5 13h8M5 16h8" stroke="#456a90"/><path d="M10 3l3 5h-6z" fill="#5a8ab0"/></svg>我的文件</div>
            <div class="list-group-item zw-muted d-flex align-items-center"><svg width="18" height="20" viewBox="0 0 18 20"><path d="M0 3h8v6H0zM11 11h7v7h-7z" fill="#d4d6d8" stroke="#aaa" stroke-width=".6"/><path d="M4 9v6h7" fill="none" stroke="#aaa"/></svg>工作目录</div>
            <div class="list-group-item d-flex align-items-center"><svg width="18" height="14" viewBox="0 0 18 14"><rect width="18" height="13" fill="#1a86dc" stroke="#0c4f8f"/><path d="M0 13l18-1" stroke="#7ac4f4"/></svg>桌面</div>
            <div class="list-group-item d-flex align-items-center"><svg width="18" height="18" viewBox="0 0 18 18"><path d="M7 1l10 3v8l-10-2z" fill="#1e8cdc" stroke="#0c5fa0" stroke-width=".6"/><path d="M0 14l9-2 8 2-6 3z" fill="#d8dadc" stroke="#aaa" stroke-width=".5"/></svg>我的电脑</div>
            <div class="list-group-item d-flex align-items-center"><svg width="18" height="16" viewBox="0 0 18 16"><path d="M0 9l12-6 6 2-9 6z" fill="#c6c8ca"/><path d="M0 9l9 2v2l-9-2z" fill="#555"/><path d="M9 11l9-6v2l-9 6z" fill="#888"/><path d="M2 12l7 2" stroke="#46a24a" stroke-width="2"/></svg>网络</div>
            <div class="list-group-item d-flex align-items-center"><svg class="zw-pf" width="13" height="19"><use href="#i-pale"/></svg>0——临时文...</div>
            <div class="list-group-item d-flex align-items-center"><svg class="zw-pf" width="13" height="19"><use href="#i-pale"/></svg>1——三维演...</div>
            <div class="list-group-item d-flex align-items-center"><svg class="zw-pf" width="13" height="19"><use href="#i-pale"/></svg>2——二维演...</div>
            <div class="list-group-item d-flex align-items-center"><svg class="zw-pf" width="13" height="19"><use href="#i-pale"/></svg>10——中望3...</div>
            <div class="list-group-item d-flex align-items-center"><svg class="zw-pf" width="13" height="19"><use href="#i-pale"/></svg>11——中望2...</div>
          </div>
          <div class="zw-files">
            <div class="zw-fhead d-flex">
              <div class="zw-ca">名称<i class="zw-sort"></i></div>
              <div class="zw-cb">类型</div>
              <div class="zw-cc">日期被修改</div>
              <div class="zw-cd">大小</div>
            </div>
            <div class="zw-frow d-flex">
              <div class="zw-ca d-flex align-items-center"><svg width="13" height="19"><use href="#i-pale"/></svg>测试标准库</div>
              <div class="zw-cb zw-latin">File Folder</div>
              <div class="zw-cc zw-latin">2022/9/14 10:00</div>
            </div>
          </div>
        </div>
        <div class="zw-dfoot d-flex align-items-center">
          <span class="text-nowrap">目录：</span>
          <div class="zw-combo position-relative">测试标准库<div class="zw-car position-absolute end-0 top-50 me-1"></div></div>
          <button class="btn zw-dbtn" type="button">选择目录</button>
          <button class="btn zw-dbtn zw-dbtn2" type="button">取消</button>
        </div>
      </div>
      <svg class="zw-axes" width="62" height="36" viewBox="0 0 62 36"><path d="M7 0l6 29" stroke="#0000c8" stroke-width="4.5"/><path d="M4 0l2 10" stroke="#18c818" stroke-width="1"/><path d="M12 28l34-17" stroke="#e0201c" stroke-width="4.5"/><path d="M13 28l32-16" stroke="#fff" stroke-width="1" stroke-dasharray="6 4"/><path d="M42 7l14-3-8 11z" fill="#e0201c"/></svg>
      <div class="zw-xl">X</div>
      <div class="zw-scale">200mm</div>
    </div>
  </div>

  <div class="zw-right">
    <div class="zw-rhead">重用库
      <div class="zw-rbtns d-flex align-items-center">
        <svg width="12" height="10" viewBox="0 0 12 10"><rect x=".5" y=".5" width="11" height="9" fill="#eceef0" stroke="#9aa0a6"/><rect x="3" y="3" width="6" height="3" fill="#9aa0a6"/></svg>
        <svg width="14" height="12" viewBox="0 0 14 12"><path d="M2 1l10 10M12 1L2 11" stroke="#a4a9ae" stroke-width="3.2"/><path d="M2 1l10 10M12 1L2 11" stroke="#eef0f2" stroke-width="1.3"/></svg>
      </div>
    </div>
    <div class="d-flex">
      <div class="zw-panel">
        <div class="zw-pbtns d-flex">
          <button class="btn zw-pbtn d-flex align-items-center justify-content-center" type="button"><svg width="22" height="22" viewBox="0 0 22 22"><path d="M8 1h6v7h7v6h-7v7H8v-7H1V8h7z" fill="#3ec83e" stroke="#2a8a3a" stroke-width=".5"/><path d="M1 8h20v3H1z" fill="#1a8a4a"/></svg></button>
          <button class="btn zw-pbtn d-flex align-items-center justify-content-center" type="button"><svg width="20" height="14" viewBox="0 0 20 14"><path d="M0 7l9-7v4h11v6H9v4z" fill="url(#blu)"/></svg></button>
          <button class="btn zw-pbtn zw-pbtn-off d-flex align-items-center justify-content-center" type="button"><svg width="20" height="14" viewBox="0 0 20 14"><path d="M20 7l-9-7v4H0v6h11v4z" fill="#bfc2c5"/></svg></button>
          <button class="btn zw-pbtn zw-pbtn-off d-flex align-items-center justify-content-center" type="button"><svg width="16" height="20" viewBox="0 0 16 20"><path d="M8 0l8 9h-5v11H5V9H0z" fill="#a9abae"/></svg></button>
          <button class="btn zw-pbtn d-flex align-items-center justify-content-center" type="button"><svg width="24" height="22" viewBox="0 0 24 22"><path d="M3 10a9 8 0 0 1 16-4" fill="none" stroke="#1a86b4" stroke-width="3"/><path d="M21 12a9 8 0 0 1-16 4" fill="none" stroke="#1a86b4" stroke-width="3"/><path d="M15 7l7-4v7zM9 15l-7 4v-7z" fill="#1a86b4"/></svg></button>
          <button class="btn zw-pbtn d-flex align-items-center justify-content-center" type="button"><svg width="24" height="20" viewBox="0 0 24 20"><path d="M1 1h7l3 3v14H1z" fill="#f8f8f8" stroke="#aaa"/><path d="M10 5h4l1 2h8v8H10z" fill="#fcc528" stroke="#d89a20" stroke-width=".6"/><path d="M2 18h11l-2-5z" fill="none" stroke="#d8241f" stroke-width="1.6"/></svg></button>
          <button class="btn zw-pbtn d-flex align-items-center justify-content-center" type="button"><svg width="24" height="20" viewBox="0 0 24 20"><path d="M1 1h7l3 3v14H1z" fill="#f8f8f8" stroke="#aaa"/><path d="M10 5h4l1 2h8v8H10z" fill="#fcc528" stroke="#d89a20" stroke-width=".6"/><path d="M3 17h10l4-4" fill="none" stroke="#d8241f" stroke-width="1.6"/></svg></button>
        </div>
        <div class="zw-tree d-flex">
          <div class="zw-tlist list-group list-group-flush">
            <div class="list-group-item d-flex align-items-center"><span class="zw-tpad1"></span><svg width="19" height="18" viewBox="0 0 19 18"><path d="M9.5 0l2.8 6 6.5.8-4.800 4.300 1.300 6.500-5.800-3.300-5.800 3.300 1.300-6.500L.2 6.800 6.700 6z" fill="#2f9fe0"/></svg><span class="zw-fav">收藏</span></div>
            <div class="list-group-item d-flex align-items-center"><svg class="zw-tchev0" width="12" height="8" viewBox="0 0 12 8"><path d="M1 1l5 5 5-5" fill="none" stroke="#444" stroke-width="1.8"/></svg><svg class="zw-zwico" width="20" height="20"><use href="#i-tool"/></svg>ZW3D Standard Parts</div>
            <div class="list-group-item d-flex align-items-center"><span class="zw-tpad d-flex justify-content-end"><svg class="me-1" width="8" height="12" viewBox="0 0 8 12"><path d="M1 1l5 5-5 5" fill="none" stroke="#999" stroke-width="1.7"/></svg></span><svg width="20" height="18"><use href="#i-fold"/></svg>ANSI</div>
            <div class="list-group-item d-flex align-items-center"><span class="zw-tpad d-flex justify-content-end"><svg class="me-1" width="8" height="12" viewBox="0 0 8 12"><path d="M1 1l5 5-5 5" fill="none" stroke="#999" stroke-width="1.7"/></svg></span><svg width="20" height="18"><use href="#i-fold"/></svg>DME</div>
            <div class="list-group-item d-flex align-items-center"><span class="zw-tpad d-flex justify-content-end"><svg class="me-1" width="8" height="12" viewBox="0 0 8 12"><path d="M1 1l5 5-5 5" fill="none" stroke="#999" stroke-width="1.7"/></svg></span><svg width="20" height="18"><use href="#i-fold"/></svg>FASTENERS</div>
            <div class="list-group-item d-flex align-items-center"><span class="zw-tpad d-flex justify-content-end"><svg class="me-1" width="8" height="12" viewBox="0 0 8 12"><path d="M1 1l5 5-5 5" fill="none" stroke="#999" stroke-width="1.7"/></svg></span><svg width="20" height="18"><use href="#i-fold"/></svg>GB</div>
            <div class="list-group-item d-flex align-items-center"><span class="zw-tpad d-flex justify-content-end"><svg class="me-1" width="8" height="12" viewBox="0 0 8 12"><path d="M1 1l5 5-5 5" fill="none" stroke="#999" stroke-width="1.7"/></svg></span><svg width="20" height="18"><use href="#i-fold"/></svg>ISO</div>
            <div class="list-group-item d-flex align-items-center"><span class="zw-tpad"></span><svg width="20" height="18"><use href="#i-fold"/></svg>TG</div>
            <div class="list-group-item d-flex align-items-center"><span class="zw-tpad d-flex justify-content-end"><svg class="me-1" width="8" height="12" viewBox="0 0 8 12"><path d="M1 1l5 5-5 5" fill="none" stroke="#999" stroke-width="1.7"/></svg></span><svg width="20" height="18"><use href="#i-fold"/></svg>TOOLS</div>
            <div class="list-group-item d-flex align-items-center"><span class="zw-tpad d-flex justify-content-end"><svg class="me-1" width="8" height="12" viewBox="0 0 8 12"><path d="M1 1l5 5-5 5" fill="none" stroke="#999" stroke-width="1.7"/></svg></span><svg width="20" height="18"><use href="#i-fold"/></svg>UNI</div>
          </div>
          <div class="zw-vs"><i class="zw-up"></i><div class="zw-thumb zw-t1"><div class="zw-grip"></div></div><i class="zw-dn"></i></div>
        </div>
        <div class="zw-lower d-grid">
          <div class="zw-col">
            <div class="zw-shead zw-shead1 d-flex align-items-center"><i class="zw-tri"></i>搜索</div>
            <div class="zw-srow d-flex">
              <div class="zw-scombo">搜索...<div class="zw-car"></div></div>
              <button class="btn zw-sbtn d-flex align-items-center justify-content-center" type="button"><svg width="20" height="20" viewBox="0 0 20 20"><circle cx="9" cy="9" r="7" fill="#fff" stroke="#888" stroke-width="1.4"/><path d="M14 14l4 4" stroke="#5ba7c9" stroke-width="2"/></svg></button>
              <button class="btn zw-sbtn ps-3" type="button"><svg width="24" height="24" viewBox="0 0 24 24"><path d="M0 1l9 8" stroke="#b9bcc0" stroke-width="3"/><path d="M1 6l8 3" stroke="#8f9398" stroke-width="2"/><path d="M9 9c4 2 6 5 8 10" fill="none" stroke="#c8201c" stroke-width="2.6"/><path d="M8 10c0 4 2 8 5 11" fill="none" stroke="#c8201c" stroke-width="2.6"/></svg></button>
            </div>
            <div class="zw-shead d-flex align-items-center"><i class="zw-tri"></i>文件列表</div>
            <div class="zw-flist list-group list-group-flush">
              <div class="list-group-item d-flex align-items-center"><svg width="20" height="20"><use href="#i-asm"/></svg>Assembly with Configutation.Z3</div>
              <div class="list-group-item d-flex align-items-center"><svg width="20" height="20"><use href="#i-asm"/></svg>Assembly with Excel-Internal Reference.Z3</div>
              <div class="list-group-item d-flex align-items-center"><svg width="20" height="20"><use href="#i-asm"/></svg>Assembly with Excel.Z3</div>
              <div class="list-group-item d-flex align-items-center"><svg width="20" height="20"><use href="#i-bolt"/></svg>Bolt with Configuration.Z3</div>
              <div class="list-group-item d-flex align-items-center"><svg width="20" height="20"><use href="#i-bolt"/></svg>Bolt with Excel.Z3</div>
              <div class="list-group-item d-flex align-items-center"><svg width="20" height="20"><use href="#i-nut"/></svg>Nut With Configuration.Z3</div>
              <div class="list-group-item d-flex align-items-center"><svg width="20" height="20"><use href="#i-nut"/></svg>Nut With Excel.Z3</div>
            </div>
            <div class="zw-ftb d-flex">
              <div class="zw-fbtn d-flex align-items-center justify-content-center"><svg width="18" height="20" viewBox="0 0 18 20"><rect width="18" height="20" fill="#dbe7ee"/><rect width="18" height="8" fill="#5fb4e4"/><path d="M0 8.5h18" stroke="#e0201c" stroke-width="1.5"/><path d="M0 13h18M0 17h18M6 9v11M12 9v11" stroke="#9fb4c0"/></svg></div>
              <div class="zw-fbtn zw-fbtn2 d-flex align-items-center justify-content-center"><svg width="22" height="20" viewBox="0 0 22 20"><path d="M2 1h6v6H2z" fill="#f4b33c"/><path d="M14 1h6v6h-6zM2 13h6v6H2z" fill="#1b6f9c"/><path d="M14 7h6v6h-6z" fill="#d8483a"/><path d="M2 7h6v6H2zM14 13h6v6h-6z" fill="#2d62a8"/><path d="M8 4h6M8 10h6M8 16h6" stroke="#999"/></svg><div class="zw-car"></div></div>
              <div class="zw-finput"></div>
            </div>
            <div class="zw-shead zw-shead2 d-flex align-items-center"><i class="zw-tri"></i>预览</div>
            <div class="zw-pv"></div>
          </div>
          <div class="zw-vs"><i class="zw-up"></i><div class="zw-thumb zw-t2"><div class="zw-grip"></div></div><i class="zw-dn"></i></div>
          <div class="zw-hs"><i class="zw-la"></i><div class="zw-hthumb"><div class="zw-hgrip"></div></div><i class="zw-ra"></i></div>
          <div class="zw-corner"></div>
        </div>
      </div>
    </div>
  </div>

  <div class="zw-side">
    <div class="d-flex justify-content-center"><svg width="30" height="27" viewBox="0 0 30 27"><path d="M.5 26.5V6h1V2c0-1 .5-1.5 1.5-1.5h6c1 0 1.5 .5 1.5 1.5v4h19v20.5z" fill="url(#fol)" stroke="#e39a55"/><path d="M1 7h28" stroke="#e39a55"/></svg></div>
    <div class="zw-stab d-flex align-items-center"><svg width="30" height="30"><use href="#i-tool"/></svg></div>
    <div class="d-flex justify-content-center"><svg width="30" height="24" viewBox="0 0 30 24"><path d="M1 11l14-6 14 6-14 7z" fill="#48d0c0"/><path d="M1 14l14 7 14-7M1 17l14 6 14-6" fill="none" stroke="#5c90b8" stroke-width="1.2"/><path d="M1 11l14 7 14-7v2l-14 7-14-7z" fill="#cde"/></svg></div>
  </div>
</div>

<div class="zw-status d-flex align-items-start">
  <div class="zw-ssep"></div>
  <div class="zw-sico zw-sico-on d-flex align-items-center justify-content-center"><svg width="22" height="20" viewBox="0 0 22 20"><rect x="1" y="0" width="20" height="20" fill="#dfe8f4" stroke="#6a8ec6"/><rect x="1" y="0" width="20" height="3" fill="#6a8ec6"/><path d="M7 5v13" stroke="#444" stroke-width="2"/><path d="M12 5h5v3h-2v10h-2V8h-1z" fill="#c8201c"/></svg></div>
  <div class="zw-sico zw-sico-on d-flex align-items-center justify-content-center"><svg width="20" height="20" viewBox="0 0 20 20"><rect x="0" y="0" width="20" height="15" fill="url(#blu)" stroke="#333"/><rect x="7" y="15" width="6" height="3" fill="#333"/><rect x="4" y="17" width="12" height="2" fill="#333"/></svg></div>
  <svg class="zw-sdoc" width="18" height="24" viewBox="0 0 18 24"><rect width="18" height="24" rx="2" fill="#6a8ec6"/><rect x="2" y="4" width="14" height="18" fill="#eef0f4"/><path d="M4 8h10M4 12h10M4 16h10M4 19h7" stroke="#999" stroke-width="1.2"/></svg>
  <div class="zw-sinput"></div>
</div>
<div class="zw-task d-flex">
  <div class="zw-tk1"></div><div class="zw-tk2"></div>
  <div class="zw-clock d-flex"><span>10:03</span><span>周三</span></div>
  <div class="zw-badge"></div>
  <div class="zw-tline"></div>
</div>

<div class="zw-sogou d-flex align-items-center">
  <span class="fw-bold">中</span>
  <svg width="20" height="20" viewBox="0 0 20 20"><circle cx="5" cy="6" r="2" fill="none" stroke="#1677c8" stroke-width="1.6"/><path d="M14 9a2.500 2.500 0 1 1 1 3c0 2-1 3-2 4" fill="#1677c8" stroke="#1677c8"/></svg>
  <svg width="20" height="20" viewBox="0 0 20 20"><circle cx="10" cy="10" r="8.5" fill="#fff" stroke="#1677c8" stroke-width="2"/><circle cx="7" cy="8" r="1.3" fill="#1677c8"/><circle cx="13" cy="8" r="1.3" fill="#1677c8"/><path d="M6 12c2 3 6 3 8 0" fill="none" stroke="#1677c8" stroke-width="1.5"/></svg>
  <svg width="18" height="20" viewBox="0 0 18 20"><rect x="5.5" y="0" width="7" height="12" rx="3.5" fill="#1677c8"/><path d="M2 8a7 7 0 0 0 14 0M9 15v4M5 19h8" fill="none" stroke="#1677c8" stroke-width="1.8"/></svg>
  <svg width="20" height="18" viewBox="0 0 20 18"><rect y="1" width="20" height="16" rx="2" fill="#1677c8"/><path d="M3 5h14M3 8.5h14" stroke="#fff" stroke-width="1.5" stroke-dasharray="2 1"/><path d="M5 12.5h10" stroke="#fff" stroke-width="1.5"/></svg>
  <svg width="18" height="20" viewBox="0 0 18 20"><circle cx="7" cy="5" r="3.5" fill="#c6ccd4"/><path d="M1 18c0-10 12-10 12 0z" fill="#c6ccd4"/><rect x="10" y="11" width="7" height="8" fill="#eef0f2" stroke="#aab"/></svg>
  <svg width="20" height="20" viewBox="0 0 20 20"><path d="M6 1l4 2 4-2 6 4-3 4-1-1v11H4V8L3 9 0 5z" fill="#1677c8"/></svg>
  <svg width="18" height="18" viewBox="0 0 18 18"><rect width="8" height="8" rx="1.5" fill="#1677c8"/><rect x="10" width="8" height="8" rx="1.5" fill="#1677c8"/><rect y="10" width="8" height="8" rx="1.5" fill="#1677c8"/><rect x="10" y="10" width="8" height="8" rx="1.5" fill="#1677c8"/></svg>
</div>
<svg class="zw-slogo" width="38" height="32" viewBox="0 0 38 32"><path d="M5 2L34 0c2 0 3 1 3 3l-1 17c0 3-2 5-5 5L8 31c-3 1-5-1-5-3L1 6c0-2 2-4 4-4z" fill="#ef5a1c"/><path d="M31 8H13c-5 0-5 7 0 7h11c5 0 5 7 0 7H7" fill="none" stroke="#fff" stroke-width="4.5"/></svg>

<div class="zw-box zw-b2"></div>
<div class="zw-box zw-b3"></div>
<div class="zw-box zw-b4"></div>
<div class="zw-box zw-b1"></div>
<div class="zw-num zw-n1 rounded-circle d-flex align-items-center justify-content-center">1</div>
<div class="zw-num zw-n2 rounded-circle d-flex align-items-center justify-content-center">2</div>
<div class="zw-num zw-n3 rounded-circle d-flex align-items-center justify-content-center">3</div>
<div class="zw-num zw-n4 rounded-circle d-flex align-items-center justify-content-center">4</div>

<script src="https://cdn.jsdelivr.net/npm/bootstrap@5.3.0/dist/js/bootstrap.bundle.min.js"></script>
</body>
</html>
